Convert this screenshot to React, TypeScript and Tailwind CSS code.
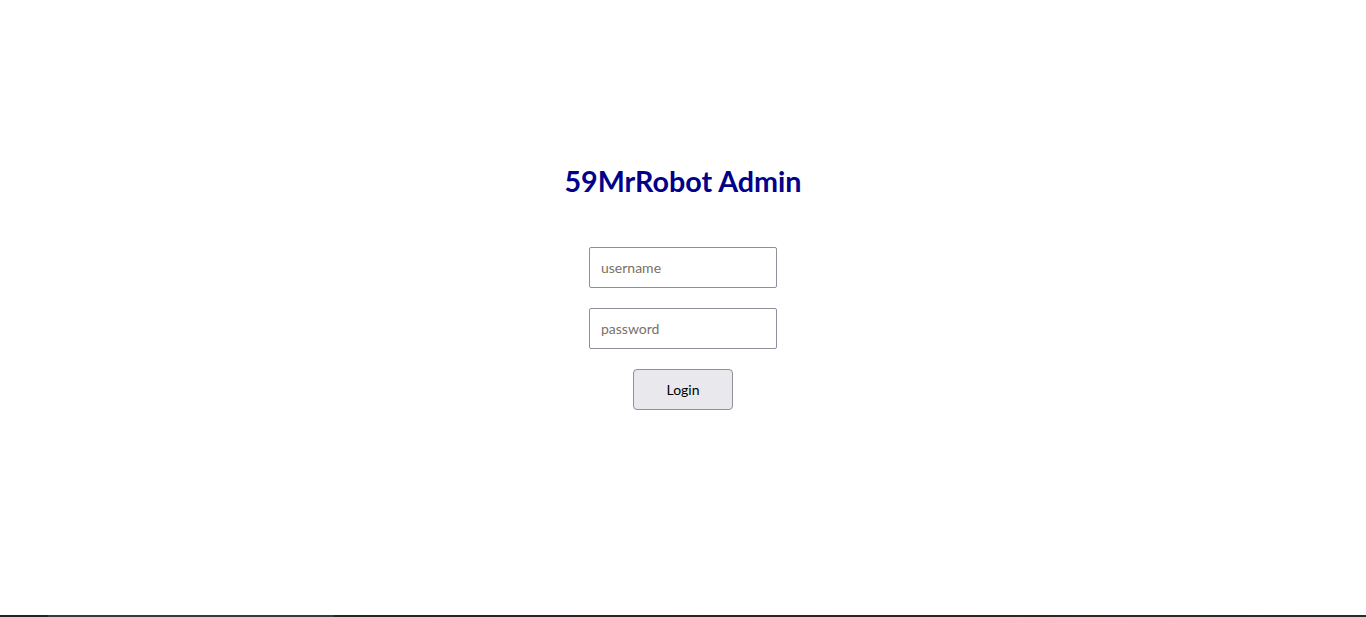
import React from "react";

const App = () => {
  return (
    <div className="h-[617px] flex flex-col bg-white font-['Lato',sans-serif]">
      <main className="flex-1 flex flex-col items-center pt-[163px]">
        <h1 className="text-[28.7px] leading-[36px] font-bold text-[#00008b]">
          59MrRobot Admin
        </h1>
        <form className="mt-[48px] flex flex-col items-center gap-5">
          <input
            type="text"
            placeholder="username"
            className="w-[188px] h-[41px] px-[11px] text-[14px] border border-[#8f8f9d] rounded-[2px] placeholder:text-[#7a6f6a] outline-none"
          />
          <input
            type="password"
            placeholder="password"
            className="w-[188px] h-[41px] px-[11px] text-[14px] border border-[#8f8f9d] rounded-[2px] placeholder:text-[#7a6f6a] outline-none"
          />
          <button
            type="button"
            className="w-[100px] h-[41px] text-[14px] text-black bg-[#e9e9ed] border border-[#8f8f9d] rounded-[4px]"
          >
            Login
          </button>
        </form>
      </main>

      {/* taskbar edge */}
      <div className="h-[2px] flex">
        <div className="w-[48px] bg-[#222222]" />
        <div className="w-[286px] bg-[#3a3a3a]" />
        <div className="flex-1 bg-gradient-to-r from-[#2a2222] via-[#3a1e20] to-[#2a2a2a]" />
      </div>
    </div>
  );
};

export default App;
